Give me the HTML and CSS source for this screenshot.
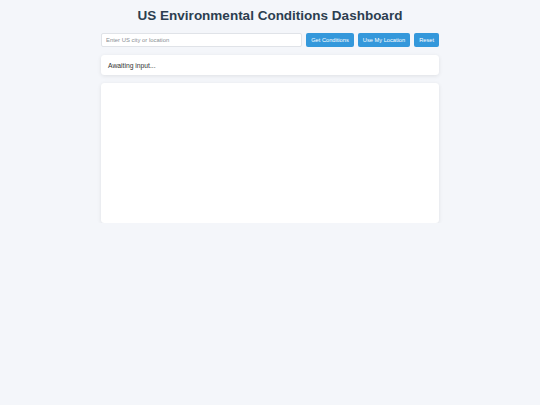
FILE: index.html
```html
<!DOCTYPE html>
<html lang="en">
<head>
<meta charset="utf-8">
<title>US Environmental Conditions Dashboard</title>
<link rel="stylesheet" href="styles.css">
</head>
<body>
<div class="container">
  <h1 class="title">US Environmental Conditions Dashboard</h1>
  <div class="controls">
    <input class="location-input" type="text" placeholder="Enter US city or location">
    <button class="btn">Get Conditions</button>
    <button class="btn">Use My Location</button>
    <button class="btn">Reset</button>
  </div>
  <div class="card status">Awaiting input...</div>
  <div class="card chart"></div>
</div>
</body>
</html>
```

FILE: styles.css
```css
html, body {
  margin: 0;
  padding: 0;
  background: #f4f6fa;
}
body {
  font-family: "Liberation Sans", Arial, sans-serif;
  padding-top: 8px;
}
.container {
  width: 338px;
  margin: 0 auto;
}
.title {
  margin: 0 0 9px;
  font-size: 13.5px;
  line-height: 16px;
  font-weight: bold;
  text-align: center;
  color: #2c3e50;
}
.controls {
  display: flex;
  gap: 4px;
  height: 14px;
}
.location-input {
  flex: 1;
  min-width: 0;
  margin: 0;
  box-sizing: border-box;
  height: 14px;
  padding: 0 4px;
  border: 1px solid #e0e3e8;
  border-radius: 2px;
  background: #fff;
  font-family: "Liberation Sans", Arial, sans-serif;
  font-size: 5.9px;
  color: #333;
  outline: none;
}
.location-input::placeholder {
  color: #8a8f96;
}
.btn {
  margin: 0;
  height: 14px;
  padding: 0 5px;
  border: none;
  border-radius: 2px;
  background: #3498db;
  color: #fff;
  font-family: "Liberation Sans", Arial, sans-serif;
  font-size: 5.7px;
  cursor: pointer;
}
.card {
  background: #fff;
  border-radius: 3.5px;
  box-shadow: 0 1px 4px rgba(0, 0, 0, 0.09);
  box-sizing: border-box;
}
.status {
  margin-top: 8px;
  height: 20px;
  padding: 0 7px;
  display: flex;
  align-items: center;
  font-size: 6.75px;
  color: #333;
}
.chart {
  margin-top: 8px;
  height: 140px;
}
```
